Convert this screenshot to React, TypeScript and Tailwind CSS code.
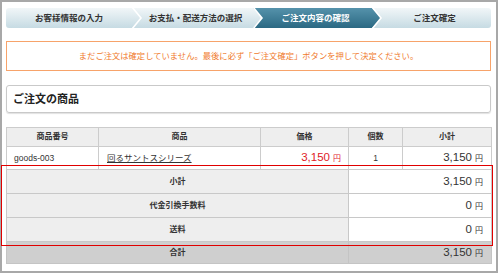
import React from "react";

const font = { fontFamily: '"Liberation Sans", "Noto Sans CJK JP", sans-serif' };

function Yen({ v, red }: { v: string; red?: boolean }) {
  return (
    <span className={red ? "text-[#e0201f]" : "text-[#333]"}>
      <span className="text-[11.5px]">{v}</span>
      <span className="text-[8px] ml-[3px]">円</span>
    </span>
  );
}

export default function App() {
  const b1 = 126, b2 = 247, b3 = 366;
  return (
    <div className="w-[500px] h-[274px] bg-white relative" style={font}>
      <div className="w-[498px] h-[273px] border-2 border-[#a8a8a8] pl-[4px] pt-[6px]">
        {/* Steps */}
        <div className="relative w-[485px] h-[20px]">
          <svg className="absolute inset-0" width="485" height="20" viewBox="0 0 485 20">
            <defs>
              <linearGradient id="lg" x1="0" y1="0" x2="0" y2="1">
                <stop offset="0" stopColor="#f1f6f8" />
                <stop offset="1" stopColor="#c6dbe3" />
              </linearGradient>
              <linearGradient id="dg" x1="0" y1="0" x2="0" y2="1">
                <stop offset="0" stopColor="#5592ab" />
                <stop offset="1" stopColor="#2b6983" />
              </linearGradient>
            </defs>
            <rect x="0" y="0" width="485" height="20" rx="3" fill="url(#lg)" />
            <polygon
              points={`${b2},0 ${b3},0 ${b3 + 9},10 ${b3},20 ${b2},20 ${b2 + 9},10`}
              fill="url(#dg)"
            />
            {[b1, b2, b3].map((b) => (
              <polyline
                key={b}
                points={`${b},-1 ${b + 9},10 ${b},21`}
                fill="none"
                stroke="#ffffff"
                strokeWidth="1.6"
              />
            ))}
          </svg>
          <div className="relative flex h-[20px] items-center text-[8.5px] font-bold text-[#333] leading-none">
            <span className="w-[126px] text-center">お客様情報の入力</span>
            <span className="w-[121px] pl-[6px] text-center">お支払・配送方法の選択</span>
            <span className="w-[119px] pl-[6px] text-center text-white">ご注文内容の確認</span>
            <span className="w-[119px] pl-[6px] text-center">ご注文確定</span>
          </div>
        </div>

        {/* Notice */}
        <div className="mt-[13px] w-[485px] h-[30px] border border-[#f7a36a] flex items-center justify-center text-[8.3px] text-[#f07a2c]">
          まだご注文は確定していません。最後に必ず「ご注文確定」ボタンを押して決定ください。
        </div>

        {/* Section heading */}
        <div className="mt-[14px] w-[485px] h-[28px] border border-[#c9c9c9] rounded-[3px] shadow-[0_1px_1px_rgba(0,0,0,0.12)] flex items-center pl-[6px] text-[11px] font-bold text-[#222]">
          ご注文の商品
        </div>

        {/* Table */}
        <table className="mt-[14px] w-[485px] border-collapse text-[8px] text-[#333] table-fixed">
          <colgroup>
            <col className="w-[92px]" />
            <col className="w-[162px]" />
            <col className="w-[88px]" />
            <col className="w-[54px]" />
            <col className="w-[89px]" />
          </colgroup>
          <tbody>
            <tr className="h-[19px] bg-[#eeeeee] font-bold">
              <td className="border border-[#cccccc] text-center">商品番号</td>
              <td className="border border-[#cccccc] text-center">商品</td>
              <td className="border border-[#cccccc] text-center">価格</td>
              <td className="border border-[#cccccc] text-center">個数</td>
              <td className="border border-[#cccccc] text-center">小計</td>
            </tr>
            <tr className="h-[23px] bg-white">
              <td className="border border-[#cccccc] pl-[7px] text-[8.5px]">goods-003</td>
              <td className="border border-[#cccccc] pl-[8px] text-[8.5px]">
                <span className="underline">回るサントスシリーズ</span>
              </td>
              <td className="border border-[#cccccc] text-right pr-[7px]">
                <Yen v="3,150" red />
              </td>
              <td className="border border-[#cccccc] text-center text-[8.5px]">1</td>
              <td className="border border-[#cccccc] text-right pr-[8px]">
                <Yen v="3,150" />
              </td>
            </tr>
            {[
              ["小計", "3,150"],
              ["代金引換手数料", "0"],
              ["送料", "0"],
            ].map(([l, v]) => (
              <tr key={l} className="h-[24px]">
                <td colSpan={3} className="border border-[#c8c8c8] bg-[#eeeeee] text-center font-bold">
                  {l}
                </td>
                <td colSpan={2} className="border border-[#c8c8c8] bg-white text-right pr-[8px]">
                  <Yen v={v} />
                </td>
              </tr>
            ))}
            <tr className="h-[22px] bg-[#cfcfcf]">
              <td colSpan={3} className="border border-[#c4c4c4] text-center font-bold">合計</td>
              <td colSpan={2} className="border border-[#c4c4c4] text-right pr-[8px]">
                <Yen v="3,150" />
              </td>
            </tr>
          </tbody>
        </table>
      </div>

      {/* Red annotation overlay */}
      <div className="absolute left-[1px] top-[165px] w-[492px] h-[81px] border border-[#e00000] pointer-events-none" />
    </div>
  );
}
